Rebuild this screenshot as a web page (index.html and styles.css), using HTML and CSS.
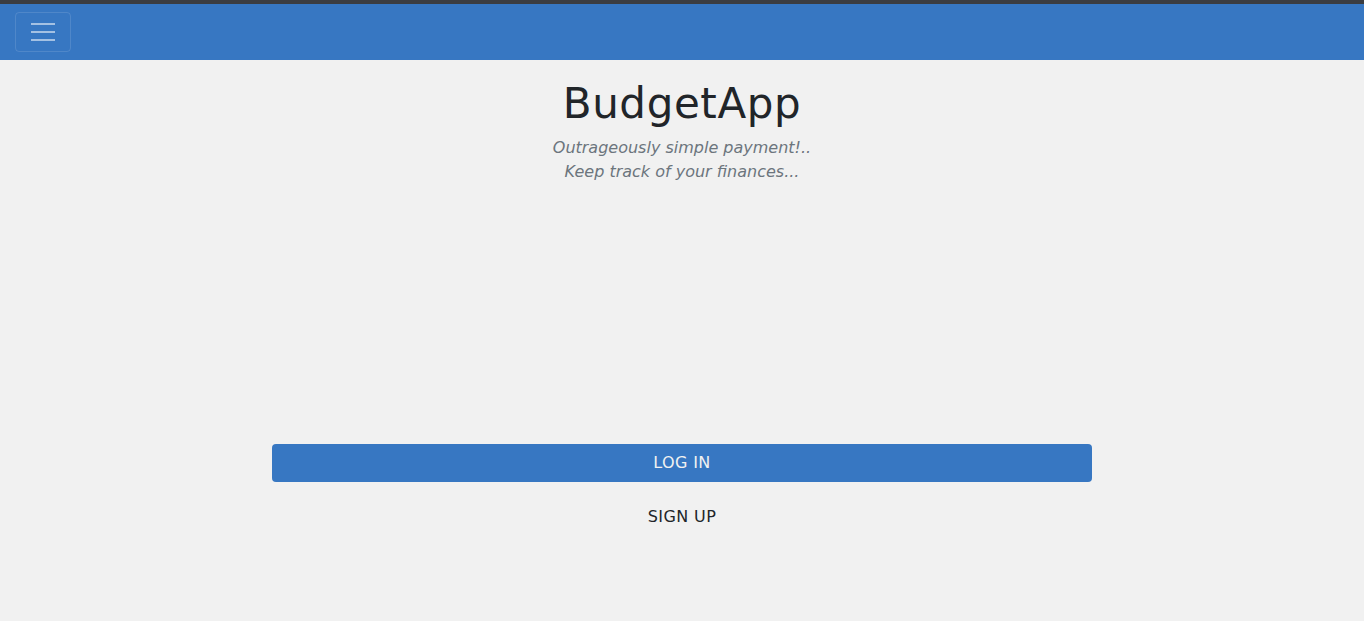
FILE: index.html
```html
<!DOCTYPE html>
<html lang="en">
<head>
<meta charset="utf-8">
<title>BudgetApp</title>
<link rel="stylesheet" href="styles.css">
</head>
<body>
<div class="topline"></div>
<nav class="navbar">
  <button class="toggler" aria-label="Toggle navigation">
    <span class="bar"></span><span class="bar"></span><span class="bar"></span>
  </button>
</nav>
<main class="main">
  <header class="hero">
    <h1 class="title">BudgetApp</h1>
    <p class="tagline">Outrageously simple payment!..</p>
    <p class="tagline">Keep track of your finances...</p>
  </header>
  <div class="actions">
    <a class="btn btn-primary" href="#">LOG IN</a>
    <a class="btn btn-link" href="#">SIGN UP</a>
  </div>
</main>
</body>
</html>
```
FILE: styles.css
```css
html, body {
  margin: 0;
  padding: 0;
}
body {
  background: #f1f1f1;
  font-family: "DejaVu Sans", "Open Sans", sans-serif;
  color: #212529;
  height: 621px;
}
.topline {
  height: 4px;
  background: #3b3d41;
}
.navbar {
  height: 56px;
  background: #3777c2;
  display: flex;
  align-items: center;
  padding: 0 15px;
  box-sizing: border-box;
}
.toggler {
  width: 56px;
  height: 40px;
  background: transparent;
  border: 1px solid rgba(255, 255, 255, 0.12);
  border-radius: 4px;
  display: flex;
  flex-direction: column;
  align-items: center;
  justify-content: center;
  gap: 6px;
  padding: 0;
}
.toggler .bar {
  display: block;
  width: 24px;
  height: 2px;
  background: rgba(255, 255, 255, 0.55);
}
.main {
  display: flex;
  flex-direction: column;
  align-items: center;
}
.hero {
  text-align: center;
  padding-top: 17px;
}
.title {
  margin: 0 0 5px;
  font-weight: 400;
  font-size: 42px;
  line-height: 54px;
  letter-spacing: 0.6px;
  color: #212529;
}
.tagline {
  margin: 0;
  font-style: italic;
  font-size: 16px;
  line-height: 24px;
  color: #6c757d;
}
.actions {
  width: 820px;
  margin-top: 260px;
  display: flex;
  flex-direction: column;
  align-items: stretch;
}
.btn {
  display: block;
  text-align: center;
  text-decoration: none;
  font-size: 16px;
  letter-spacing: 0.4px;
  line-height: 38px;
  height: 38px;
  border-radius: 4px;
}
.btn-primary {
  background: #3777c2;
  color: #f1f1f1;
}
.btn-link {
  margin-top: 16px;
  color: #212529;
}
```
